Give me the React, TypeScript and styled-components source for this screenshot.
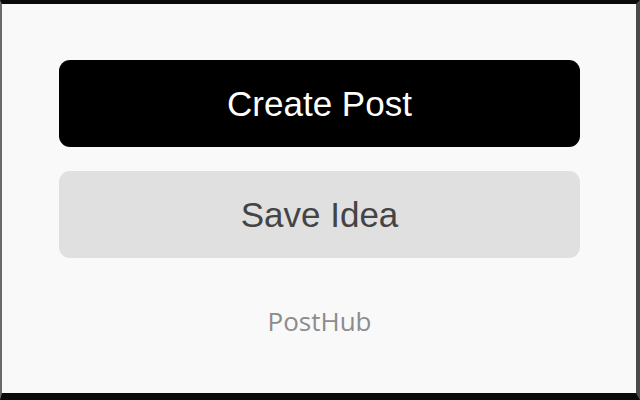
import React from "react";
import styled, { createGlobalStyle } from "styled-components";

const Global = createGlobalStyle`
  html, body { margin: 0; padding: 0; background: #000; }
  #root { width: 640px; height: 400px; }
`;

const Frame = styled.div`
  box-sizing: border-box;
  width: 640px;
  height: 400px;
  border-top: 4px solid #0a0a0a;
  border-bottom: 7px solid #0a0a0a;
  border-left: 2px solid #6a6a6a;
  border-right: 4px solid #4a4a4a;
  background: #f9f9f9;
  display: flex;
  flex-direction: column;
  align-items: stretch;
  padding: 56px 56px 0 57px;
`;

const Button = styled.button<{ $primary?: boolean }>`
  box-sizing: border-box;
  height: 87px;
  border: none;
  border-radius: 11px;
  background: ${(p) => (p.$primary ? "#000" : "#e0e0e0")};
  color: ${(p) => (p.$primary ? "#fff" : "#444")};
  font-family: "Liberation Sans", Arial, sans-serif;
  font-size: 35px;
  display: flex;
  align-items: center;
  justify-content: center;
  padding: 0;
  & + & { margin-top: 24px; }
`;

const Brand = styled.div`
  margin-top: 47px;
  text-align: center;
  font-family: "Open Sans", sans-serif;
  font-size: 26px;
  color: #8c8c8c;
  line-height: 32px;
`;

export default function App() {
  return (
    <>
      <Global />
      <Frame>
        <Button $primary>Create Post</Button>
        <Button>Save Idea</Button>
        <Brand>PostHub</Brand>
      </Frame>
    </>
  );
}
